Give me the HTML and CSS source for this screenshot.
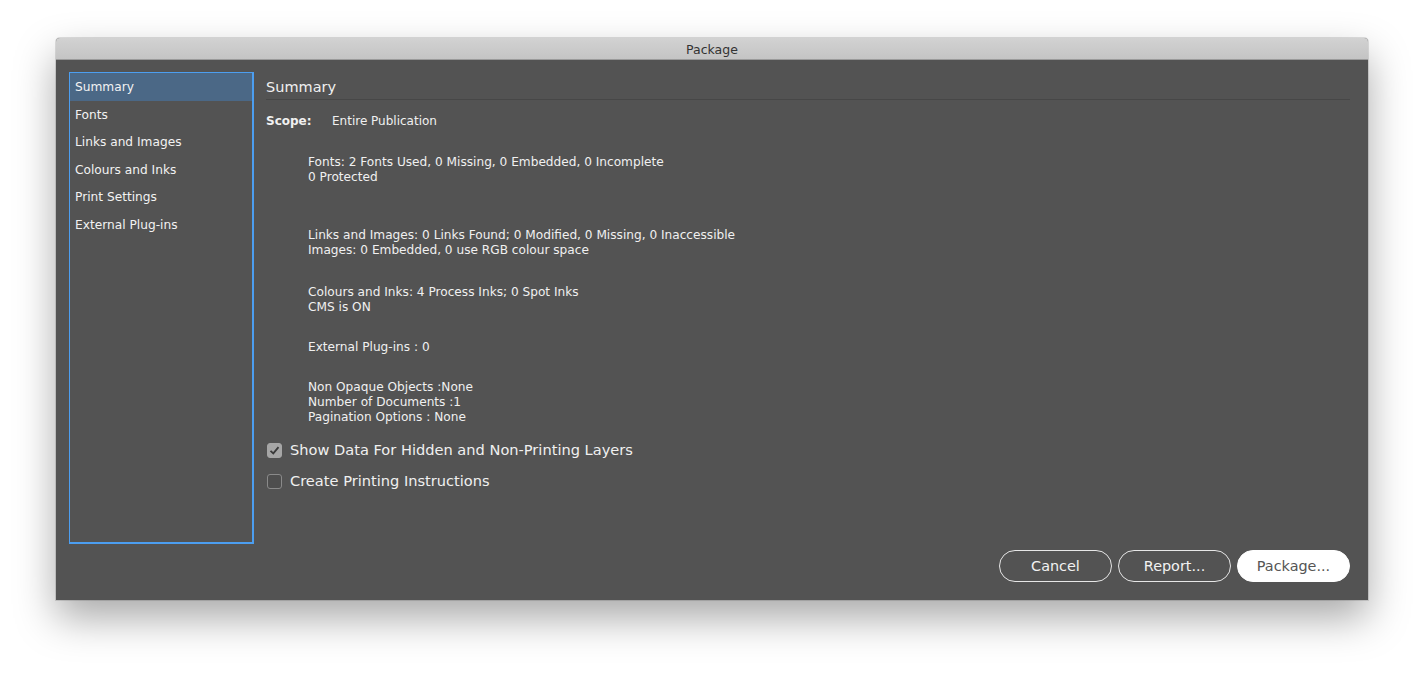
FILE: index.html
```html
<!DOCTYPE html>
<html lang="en">
<head>
    <meta charset="UTF-8">
    <title>Package</title>
    <link rel="stylesheet" href="styles.css">
</head>
<body>
    <div class="window">
        <div class="titlebar">Package</div>
        <div class="dialog">
            <div class="top">
                <ul class="sidebar">
                    <li class="nav-item selected">Summary</li>
                    <li class="nav-item">Fonts</li>
                    <li class="nav-item">Links and Images</li>
                    <li class="nav-item">Colours and Inks</li>
                    <li class="nav-item">Print Settings</li>
                    <li class="nav-item">External Plug-ins</li>
                </ul>
                <div class="panel">
                    <h2 class="panel-title">Summary</h2>
                    <div class="scope">
                        <span class="scope-label">Scope:</span>
                        <span class="scope-value">Entire Publication</span>
                    </div>
                    <div class="info info-fonts">
                        Fonts: 2 Fonts Used, 0 Missing, 0 Embedded, 0 Incomplete<br>
                        0 Protected
                    </div>
                    <div class="info info-links">
                        Links and Images: 0 Links Found; 0 Modified, 0 Missing, 0 Inaccessible<br>
                        Images: 0 Embedded, 0 use RGB colour space
                    </div>
                    <div class="info info-colours">
                        Colours and Inks: 4 Process Inks; 0 Spot Inks<br>
                        CMS is ON
                    </div>
                    <div class="info info-plugins">
                        External Plug-ins : 0
                    </div>
                    <div class="info info-misc">
                        Non Opaque Objects :None<br>
                        Number of Documents :1<br>
                        Pagination Options : None
                    </div>
                    <label class="check">
                        <span class="box checked">
                            <svg width="11" height="11" viewBox="0 0 11 11"><path d="M1.5 5.8 L4.3 8.4 L9.5 2.2" fill="none" stroke="#3a3a3a" stroke-width="1.8"/></svg>
                        </span>
                        Show Data For Hidden and Non-Printing Layers
                    </label>
                    <label class="check check-second">
                        <span class="box"></span>
                        Create Printing Instructions
                    </label>
                </div>
            </div>
            <div class="footer">
                <button class="btn">Cancel</button>
                <button class="btn">Report...</button>
                <button class="btn btn-default">Package...</button>
            </div>
        </div>
    </div>
</body>
</html>
```

FILE: styles.css
```css
html {
    height: 100%;
}
body {
    margin: 0;
    padding: 38px 0 0 56px;
    box-sizing: border-box;
    min-height: 100%;
    background-color: #ffffff;
    font-family: "DejaVu Sans", "Liberation Sans", sans-serif;
}
.window {
    width: 1312px;
    height: 562px;
    background-color: #535353;
    border-radius: 4px 4px 0 0;
    box-shadow: 0 18px 40px rgba(0, 0, 0, 0.34), 0 0 0 1px rgba(0, 0, 0, 0.12);
    display: flex;
    flex-direction: column;
    overflow: hidden;
}
.titlebar {
    height: 21px;
    line-height: 23px;
    text-align: center;
    font-size: 12.5px;
    color: #333333;
    background: linear-gradient(#d2d2d2, #c4c4c4);
    border-bottom: 1px solid #9a9a9a;
}
.dialog {
    flex: 1;
    display: flex;
    flex-direction: column;
    padding: 12px 18px 18px 13px;
}
.top {
    display: flex;
    gap: 12px;
}
.sidebar {
    list-style: none;
    margin: 0;
    padding: 0;
    width: 182px;
    height: 469px;
    border: 2px solid #4c9ef0;
    border-left-width: 1px;
    border-top-width: 1px;
}
.nav-item {
    height: 27.5px;
    line-height: 29px;
    padding-left: 5px;
    font-size: 12.2px;
    color: #f2f2f2;
}
.nav-item.selected {
    background-color: #4b6886;
}
.panel {
    flex: 1;
    color: #f0f0f0;
}
.panel-title {
    margin: 4px 0 0 0;
    font-size: 14.5px;
    font-weight: normal;
    line-height: 22px;
    padding-bottom: 1px;
    border-bottom: 1px solid #474747;
}
.scope {
    margin-top: 13px;
    font-size: 12px;
    line-height: 16px;
    display: flex;
}
.scope-label {
    font-weight: bold;
    width: 66px;
}
.info {
    margin-left: 42px;
    font-size: 12.15px;
    line-height: 15px;
}
.info-fonts {
    margin-top: 26px;
}
.info-links {
    margin-top: 43px;
}
.info-colours {
    margin-top: 27px;
}
.info-plugins {
    margin-top: 25px;
}
.info-misc {
    margin-top: 25px;
}
.check {
    display: flex;
    align-items: center;
    gap: 8px;
    margin-top: 16px;
    margin-left: 1px;
    font-size: 14.6px;
    line-height: 18px;
}
.check-second {
    margin-top: 13px;
}
.box {
    width: 13px;
    height: 13px;
    border: 1px solid #8a8a8a;
    border-radius: 3px;
    display: flex;
    align-items: center;
    justify-content: center;
    background-color: #4e4e4e;
}
.box.checked {
    background-color: #a6a6a6;
    border-color: #a6a6a6;
}
.footer {
    margin-top: 6px;
    display: flex;
    justify-content: flex-end;
    gap: 6px;
}
.btn {
    width: 113px;
    height: 32px;
    border: 1px solid #e6e6e6;
    border-radius: 16px;
    background-color: transparent;
    color: #f2f2f2;
    font-family: "DejaVu Sans", "Liberation Sans", sans-serif;
    font-size: 14.4px;
    padding: 0;
}
.btn-default {
    background-color: #ffffff;
    border-color: #ffffff;
    color: #555555;
}
```
